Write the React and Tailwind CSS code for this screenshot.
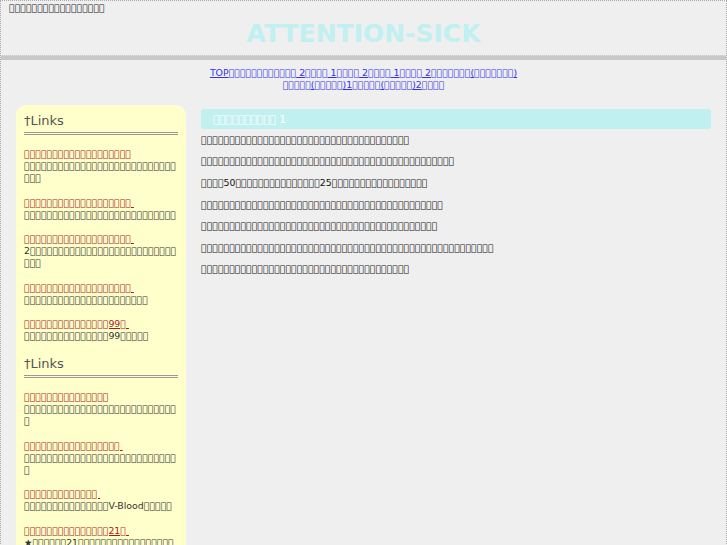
import React from "react";

const X = "\uE000";
const t = (n) => Array(n).fill(X).join("\u200B");

const entries1 = [
  { title: t(19), desc: t(30) },
  { title: t(19) + " ", desc: t(27) },
  { title: t(19) + " ", desc: "2" + t(29) },
  { title: t(19) + " ", desc: t(22) },
  { title: t(15) + "99" + t(1) + " ", desc: t(15) + "99" + t(5) },
];
const entries2 = [
  { title: t(15), desc: t(28) },
  { title: t(17) + " ", desc: t(28) },
  { title: t(13) + " ", desc: t(15) + "V-Blood" + t(5) },
  { title: t(15) + "21" + t(1) + " ", desc: "★" + t(6) + "21" + t(40) },
];

function Block({ entries }) {
  return (
    <div>
      <h2 className="text-[13px] leading-[16px] text-[#555] pt-[1px] pb-[3px] border-b-[3px] border-double border-[#999]">
        †Links
      </h2>
      <div className="pt-[13px] flex flex-col gap-[12.5px]">
        {entries.map((e, i) => (
          <div key={i} className="text-[9.4px] leading-[12px]">
            <a href="#" className="text-[#aa1a1a] underline whitespace-pre">
              {e.title}
            </a>
            <div className="text-[#333]">{e.desc}</div>
          </div>
        ))}
      </div>
    </div>
  );
}

export default function App() {
  const paras = [
    t(37),
    t(45),
    t(4) + "50" + t(15) + "25" + t(17),
    t(43),
    t(42),
    t(52),
    t(37),
  ];
  return (
    <div className="min-h-[545px] bg-[#efefef] border border-dotted border-[#aaa] font-['DejaVu_Sans',sans-serif] overflow-hidden">
      <div className="px-[8px] pt-[1px] text-[9.4px] leading-[12px] text-[#222]">
        {t(17)}
      </div>
      <h1 className="text-center text-[25px] leading-[30px] font-bold text-[#c0f0f0] mt-[5px]">
        ATTENTION-SICK
      </h1>
      <div className="mt-[6px] h-[5px] bg-[#c8c8c8] border-t border-dotted border-[#e0e0e0]" />
      <div className="text-center text-[9.4px] leading-[12px] mt-[7px]">
        <a href="#" className="text-[#3333ee] underline">
          TOP{t(12)} 2{t(4)} 1{t(4)} 2{t(4)} 1{t(4)} 2{t(7)}({t(7)})
        </a>
        <br />
        <a href="#" className="text-[#3333ee] underline">
          {t(5)}({t(5)})1{t(5)}({t(5)})2{t(4)}
        </a>
      </div>
      <div className="flex px-[15px] gap-[15px] mt-[14px]">
        <div className="w-[170px] shrink-0 bg-[#ffffcc] rounded-t-[10px] px-[8px] pt-[7px] pb-[20px] flex flex-col gap-[13px] min-h-[460px]">
          <Block entries={entries1} />
          <Block entries={entries2} />
        </div>
        <div className="flex-1 pt-[4px]">
          <div className="bg-[#c0f0f0] rounded-[3px] h-[20px] px-[12px] text-[10.5px] leading-[20px] text-white">
            {t(10)} 1
          </div>
          <div className="flex flex-col text-[9.4px] leading-[12px] text-[#111]">
            {paras.map((p, i) => (
              <p key={i} className="py-[4.8px]">
                {p}
              </p>
            ))}
          </div>
        </div>
      </div>
    </div>
  );
}
